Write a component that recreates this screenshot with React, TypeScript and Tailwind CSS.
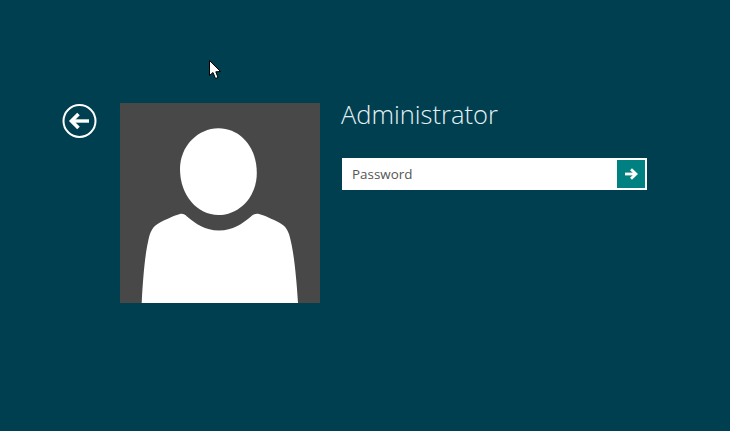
const App = () => {
  return (
    <div className="relative h-[431px] w-[730px] overflow-hidden bg-[#003f50] font-['Open_Sans',sans-serif]">
      {/* mouse pointer */}
      <svg className="absolute left-[208px] top-[59px]" width="14" height="22" viewBox="0 0 14 22">
        <path
          d="M1.5 1.5 L1.5 16.5 L5 13.5 L7.5 19.5 L10 18.5 L7.8 12.8 L12.5 12.5 Z"
          fill="#fff"
          stroke="#000"
          strokeWidth="1"
        />
      </svg>

      <div className="flex items-start pl-[62px] pt-[103px]">
        <button className="mt-px mr-[23px] h-[35px] w-[35px] shrink-0">
          <svg width="35" height="35" viewBox="0 0 35 35" fill="none">
            <circle cx="17.5" cy="17" r="16" stroke="#fff" strokeWidth="2" />
            <path d="M10 17 H27" stroke="#fff" strokeWidth="3.4" />
            <path d="M16.5 10 L9.5 17 L16.5 24" stroke="#fff" strokeWidth="3.6" />
          </svg>
        </button>

        <div className="h-[200px] w-[200px] shrink-0 bg-[#484848]">
          <svg width="200" height="200" viewBox="0 0 200 200">
            <path
              d="M98.5 25.3 C120 25.3 136.8 44 136.8 70 C136.8 94 119 112 98.5 112 C77 112 60 92 60 66 C60 43 78 25.3 98.5 25.3 Z"
              fill="#fff"
            />
            <path
              d="M21.7 200 C23 175 25 152 28 139 C30 128 33 123 40 119.5 C46 116.5 54 112.5 60 111 C63 110.5 65 111.5 67 113.5 C76 121 85 127.5 99 127.5 C113 127.5 122 121 131 113.5 C133 111.5 135 110.5 139 111 C145 112.5 153 116.5 159 119.5 C166 123 169 128 171 139 C174 152 176.5 175 178 200 Z"
              fill="#fff"
            />
          </svg>
        </div>

        <div className="ml-[21px] flex flex-col">
          <div className="-mt-px h-[56px] text-[25.5px] leading-[25px] font-light text-[#e4f1f4]">
            Administrator
          </div>
          <div className="ml-px flex h-8 w-[305px] items-center border-2 border-white bg-white">
            <span className="flex-1 pl-2 pt-px text-[13.4px] leading-none text-[#555]">Password</span>
            <div className="flex h-7 w-7 items-center justify-center bg-[#008080]">
              <svg width="14" height="12" viewBox="0 0 14 12" fill="none">
                <path d="M1 6 H12" stroke="#fff" strokeWidth="2.8" />
                <path d="M7 1.2 L12 6 L7 10.8" stroke="#fff" strokeWidth="2.8" />
              </svg>
            </div>
          </div>
        </div>
      </div>
    </div>
  );
};

export default App;
